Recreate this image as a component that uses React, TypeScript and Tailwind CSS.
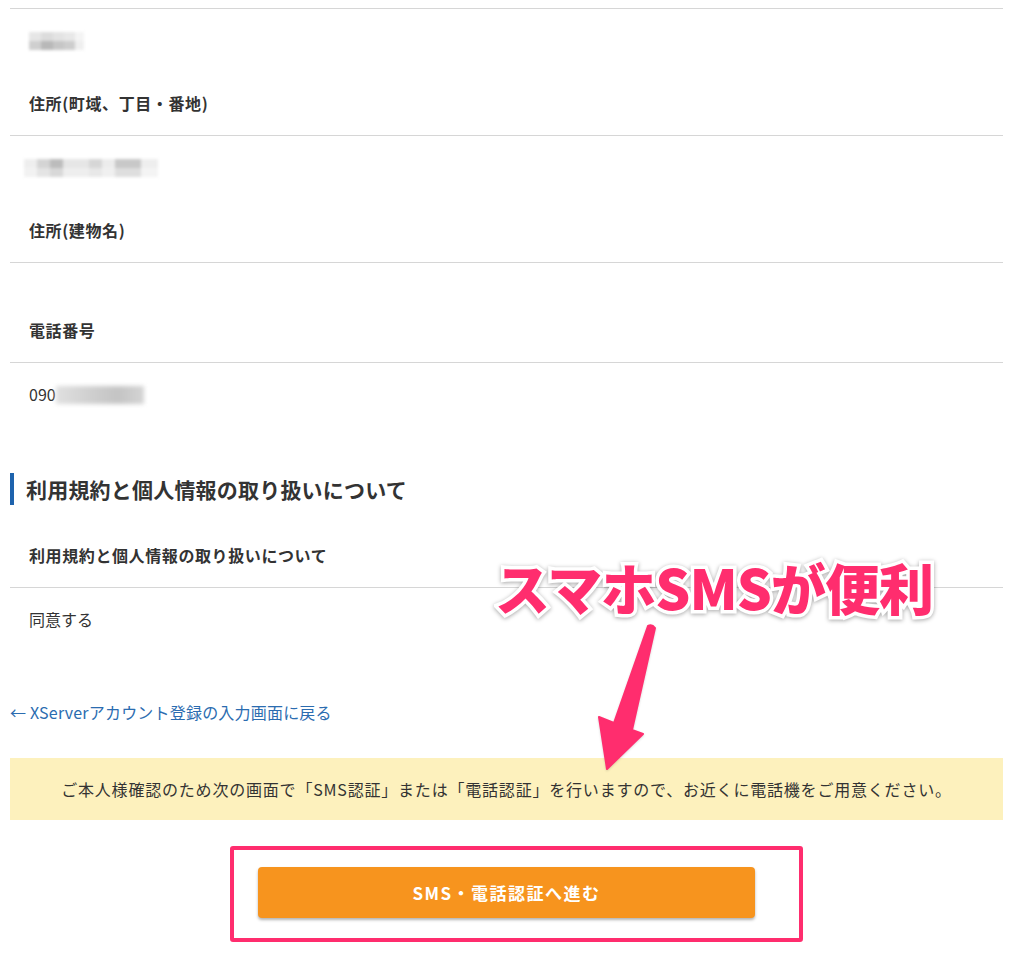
import React from 'react';

const FONT = 'font-["Noto_Sans_CJK_JP","Noto_Sans",sans-serif]';

type Cell = { w: number; top: string; bottom: string };

function Mosaic({ cells }: { cells: Cell[] }) {
  return (
    <div className="flex blur-[1.5px]">
      {cells.map((c, i) => (
        <div key={i} className="flex flex-col" style={{ width: c.w }}>
          <div className="h-[9px]" style={{ background: c.top }} />
          <div className="h-[9px]" style={{ background: c.bottom }} />
        </div>
      ))}
    </div>
  );
}

function Field({ label, value }: { label: string; value?: React.ReactNode }) {
  return (
    <div className="border-t border-[#d6d6d6]">
      <div className="px-[19px] py-[18px] text-[16px] leading-[27px] text-[#333]">
        {value}
      </div>
      <div className="px-[19px] py-[18px] text-[16px] font-bold leading-[27px] tracking-[0.6px] text-[#333]">
        {label}
      </div>
    </div>
  );
}

export default function App() {
  return (
    <div className={`relative min-h-[963px] bg-white ${FONT}`}>
      <div className="ml-[10px] w-[993px] pt-[8px]">
        <Field
          label="住所(町域、丁目・番地)"
          value={
            <div className="flex h-[27px] items-center">
              <Mosaic
                cells={[
                  { w: 12, top: '#e6e6e6', bottom: '#cfcfcf' },
                  { w: 12, top: '#dcdcdc', bottom: '#b8b8b8' },
                  { w: 11, top: '#e3e3e3', bottom: '#c6c6c6' },
                  { w: 11, top: '#e8e8e8', bottom: '#cdcdcd' },
                  { w: 9, top: '#f4f4f4', bottom: '#efefef' },
                ]}
              />
            </div>
          }
        />
        <Field
          label="住所(建物名)"
          value={
            <div className="-ml-[5px] flex h-[27px] items-center">
              <Mosaic
                cells={[
                  { w: 13, top: '#eeeeee', bottom: '#f2f2f2' },
                  { w: 13, top: '#d4d4d4', bottom: '#e4e4e4' },
                  { w: 13, top: '#bcbcbc', bottom: '#d8d8d8' },
                  { w: 26, top: '#e6e6e6', bottom: '#eeeeee' },
                  { w: 13, top: '#d6d6d6', bottom: '#e8e8e8' },
                  { w: 13, top: '#ececec', bottom: '#f0f0f0' },
                  { w: 26, top: '#c8c8c8', bottom: '#dedede' },
                  { w: 17, top: '#eeeeee', bottom: '#f4f4f4' },
                ]}
              />
            </div>
          }
        />
        <Field label="電話番号" />
        <div className="border-t border-[#d6d6d6]">
          <div className="flex items-center px-[19px] py-[18px] text-[16px] leading-[27px] text-[#333]">
            <span>090</span>
            <div className="h-[18px] w-[88px] bg-[linear-gradient(90deg,#e0e0e0,#cfcfcf_40%,#c4c4c4_70%,#d4d4d4)] blur-[2px]" />
          </div>
        </div>

        <h2 className="mt-[47px] flex items-center gap-[12px] text-[21px] font-bold leading-[32px] tracking-[0.2px] text-[#333]">
          <span className="h-[32px] w-[4px] bg-[#1e63ad]" />
          利用規約と個人情報の取り扱いについて
        </h2>
        <div className="mt-[19px]">
          <div className="px-[19px] py-[18px] text-[16px] font-bold leading-[27px] tracking-[0.6px] text-[#333]">
            利用規約と個人情報の取り扱いについて
          </div>
          <div className="border-t border-[#d6d6d6] px-[19px] py-[18px] text-[16px] leading-[27px] text-[#333]">
            同意する
          </div>
        </div>

        <a
          href="#"
          className="mt-[49px] block text-[16px] leading-[24px] tracking-[0.2px] text-[#2b6cb0]"
        >
          ← XServerアカウント登録の入力画面に戻る
        </a>

        <div className="mt-[34px] bg-[#fdf1bd] py-[19px] text-center text-[16px] leading-[24px] tracking-[0.8px] text-[#333]">
          ご本人様確認のため次の画面で「SMS認証」または「電話認証」を行いますので、お近くに電話機をご用意ください。
        </div>

        <div className="mt-[47px] flex justify-center">
          <div className="relative">
            <button className="h-[51px] w-[497px] rounded-[4px] bg-[#f7941e] text-[17px] font-bold tracking-[1.5px] text-white shadow-[0_2px_3px_rgba(0,0,0,0.3)]">
              SMS・電話認証へ進む
            </button>
            <div className="pointer-events-none absolute -left-[28px] -right-[48px] -top-[21px] -bottom-[24px] rounded-[3px] border-[4px] border-[#ff2d6e]" />
          </div>
        </div>
      </div>

      <div className="pointer-events-none absolute left-[495px] top-[551px] text-[55px] font-black leading-[70px] tracking-[-1px] text-[#ff2d6e] [-webkit-text-stroke:7px_white] [paint-order:stroke_fill] drop-shadow-[0_1px_2px_rgba(0,0,0,0.35)]">
        スマホSMSが便利
      </div>

      <svg
        className="pointer-events-none absolute left-[590px] top-[620px] drop-shadow-[0_1px_1px_rgba(0,0,0,0.15)]"
        width="70"
        height="155"
        viewBox="0 0 70 155"
      >
        <path
          d="M58 6 Q62 4 65 8 L42 110 L53 114 L17 149 L9 97 L24 103 Z"
          fill="#ff2d6e"
          stroke="#ff2d6e"
          strokeWidth="2"
          strokeLinejoin="round"
        />
      </svg>
    </div>
  );
}
